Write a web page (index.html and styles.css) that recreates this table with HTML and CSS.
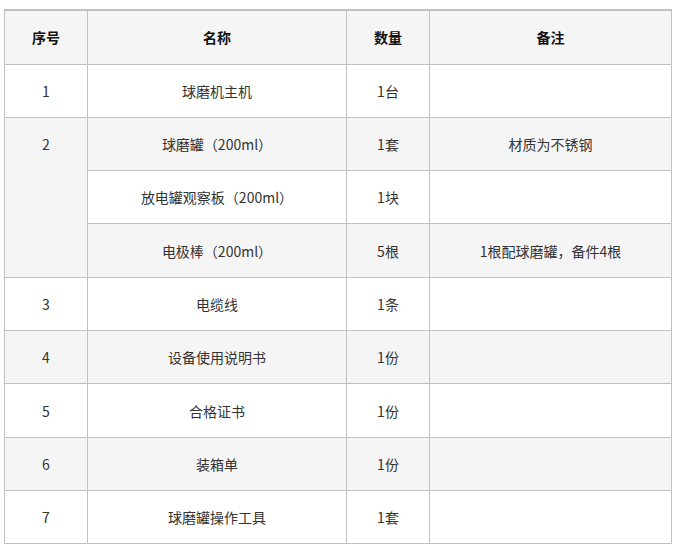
FILE: index.html
```html
<!DOCTYPE html>
<html lang="zh-CN">
<head>
<meta charset="utf-8">
<link rel="stylesheet" href="styles.css">
</head>
<body>
<div class="wrap">
<table class="list">
  <colgroup>
    <col class="c1"><col class="c2"><col class="c3"><col class="c4">
  </colgroup>
  <thead>
    <tr><th>序号</th><th>名称</th><th>数量</th><th>备注</th></tr>
  </thead>
  <tbody>
    <tr><td>1</td><td>球磨机主机</td><td>1台</td><td></td></tr>
    <tr><td rowspan="3" class="top">2</td><td>球磨罐（200ml）</td><td>1套</td><td>材质为不锈钢</td></tr>
    <tr><td>放电罐观察板（200ml）</td><td>1块</td><td></td></tr>
    <tr><td>电极棒（200ml）</td><td>5根</td><td>1根配球磨罐，备件4根</td></tr>
    <tr><td>3</td><td>电缆线</td><td>1条</td><td></td></tr>
    <tr><td>4</td><td>设备使用说明书</td><td>1份</td><td></td></tr>
    <tr><td>5</td><td>合格证书</td><td>1份</td><td></td></tr>
    <tr><td>6</td><td>装箱单</td><td>1份</td><td></td></tr>
    <tr><td>7</td><td>球磨罐操作工具</td><td>1套</td><td></td></tr>
  </tbody>
</table>
</div>
</body>
</html>
```
FILE: styles.css
```css
html, body {
  margin: 0;
  padding: 0;
  background: #fff;
}
.wrap {
  padding: 9px 0 0 4px;
}
.list {
  border-collapse: collapse;
  table-layout: fixed;
  width: 667px;
  font-family: "Microsoft YaHei", "Noto Sans CJK SC", sans-serif;
  font-size: 14px;
  color: #333;
  border-top: 2px solid #c0c0c0;
}
.c1 { width: 83px; }
.c2 { width: 259px; }
.c3 { width: 83px; }
.c4 { width: 242px; }
.list th, .list td {
  border: 1px solid #c0c0c0;
  height: 53.33px;
  padding: 0 8px;
  text-align: center;
  vertical-align: middle;
  line-height: 20px;
  box-sizing: border-box;
}
.list th {
  background: #f5f5f5;
  color: #111;
  font-weight: bold;
  height: 54px;
}
.list tbody tr:nth-child(even) td {
  background: #f5f5f5;
}
.list td.top {
  vertical-align: top;
  padding-top: 16px;
}
```
